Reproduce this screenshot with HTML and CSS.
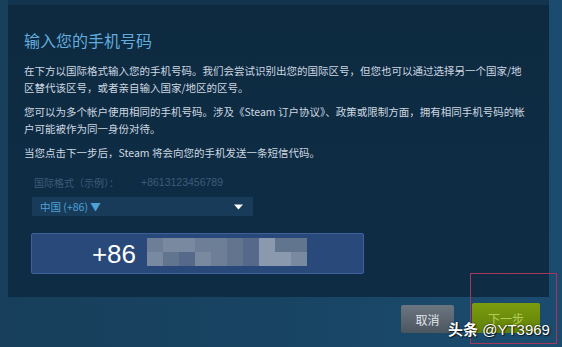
FILE: index.html
```html
<!DOCTYPE html>
<html lang="zh-CN">
<head>
<meta charset="utf-8">
<title>输入您的手机号码</title>
<link rel="stylesheet" href="styles.css">
</head>
<body>
<div class="page">
  <div class="panel">
    <h1 class="title">输入您的手机号码</h1>
    <p class="text">在下方以国际格式输入您的手机号码。我们会尝试识别出您的国际区号，但您也可以通过选择另一个国家/地<br>区替代该区号，或者亲自输入国家/地区的区号。</p>
    <p class="text">您可以为多个帐户使用相同的手机号码。涉及《Steam 订户协议》、政策或限制方面，拥有相同手机号码的帐<br>户可能被作为同一身份对待。</p>
    <p class="text">当您点击下一步后，Steam 将会向您的手机发送一条短信代码。</p>
    <div class="form">
      <div class="example">
        <span class="example-label">国际格式（示例）：</span>
        <span class="example-value">+8613123456789</span>
      </div>
      <div class="select">
        <span class="select-text">中国 (+86) ▼</span>
        <svg class="caret" width="9" height="6" viewBox="0 0 9 6"><path d="M0 0.5H9L4.5 5.5Z" fill="#ffffff"/></svg>
      </div>
      <div class="phone">
        <span class="cc">+86</span>
        <div class="mosaic">
          <i class="m2"></i><i class="m1"></i><i class="m1"></i><i class="m2"></i><i class="m2"></i><i class="m3"></i><i class="m4"></i><i class="m5"></i><i class="m3"></i><i class="m3"></i>
          <i class="m1"></i><i class="m3"></i><i class="m4"></i><i class="m1"></i><i class="m2"></i><i class="m3"></i><i class="m4"></i><i class="m5"></i><i class="m5"></i><i class="m1"></i>
        </div>
      </div>
    </div>
  </div>
  <div class="footer">
    <button class="btn btn-cancel">取消</button>
    <button class="btn btn-next">下一步</button>
  </div>
  <div class="highlight"></div>
  <div class="watermark"><b>头条</b> @YT3969</div>
</div>
</body>
</html>
```

FILE: styles.css
```css
* { box-sizing: border-box; }
html, body { margin: 0; padding: 0; }
body {
  width: 562px;
  height: 347px;
  overflow: hidden;
  font-family: "Noto Sans CJK SC", "Noto Sans", "Liberation Sans", sans-serif;
  background: linear-gradient(90deg, #173f5b 0%, #184463 50%, #1b4c6f 100%);
}
.page {
  position: relative;
  height: 347px;
  padding: 5px 13px 0 8px;
}
.panel {
  height: 292px;
  padding: 25px 16px 0 16px;
  background: linear-gradient(180deg, #0d2a40 0%, #0e2d45 100%);
  box-shadow: 0 -5px 0 #12344f;
}
.title {
  margin: 0 0 12px 0;
  font-size: 16px;
  line-height: 20px;
  font-weight: 400;
  color: #62acdd;
}
.text {
  margin: 0 0 7px 0;
  font-size: 10.5px;
  line-height: 17px;
  color: #cdd8e1;
  white-space: nowrap;
}
.form {
  margin: 13px 0 0 8px;
}
.example {
  display: flex;
  padding-left: 2px;
  font-size: 10px;
  line-height: 17px;
  color: #3c5d7a;
  white-space: nowrap;
}
.example-label { flex: none; width: 107px; }
.example-value {
  font-family: "Liberation Sans", "Noto Sans", sans-serif;
  font-size: 10.5px;
}
.select {
  margin-top: 6px;
  width: 221px;
  height: 19px;
  padding: 0 10px 0 8px;
  display: flex;
  align-items: center;
  justify-content: space-between;
  background: #173b58;
  font-size: 10.5px;
  color: #4ea2d8;
}
.phone {
  margin: 17px 0 0 -1px;
  width: 333px;
  height: 41px;
  display: flex;
  align-items: center;
  gap: 11px;
  background: #29497a;
  border: 1px solid #3e619b;
  border-radius: 2px;
}
.cc {
  width: 104px;
  text-align: right;
  font-family: "Liberation Sans", "Noto Sans", sans-serif;
  font-size: 26px;
  color: #ffffff;
  line-height: 30px;
}
.mosaic {
  display: grid;
  grid-template-columns: repeat(10, 16px);
  grid-template-rows: 14px 14px;
  width: 159px;
  margin-top: -4px;
}
.mosaic i { display: block; }
.m1 { background: #7889a0; }
.m2 { background: #6d7f97; }
.m3 { background: #62758e; }
.m4 { background: #56698a; }
.m5 { background: #8a99ad; }
.footer {
  display: flex;
  justify-content: flex-end;
  align-items: center;
  gap: 18px;
  padding: 6px 9px 0 0;
}
.btn {
  border: 0;
  border-radius: 2px;
  font-family: "Noto Sans CJK SC", sans-serif;
  font-size: 12px;
  padding: 0;
}
.btn-cancel {
  width: 53px;
  height: 28px;
  margin-top: 2px;
  color: #e2e6ea;
  background: linear-gradient(180deg, #6b7681 0%, #4b5660 100%);
}
.btn-next {
  width: 68px;
  height: 30px;
  color: #b4cc5e;
  background: linear-gradient(180deg, #7a9c0e 0%, #617f07 100%);
}
.highlight {
  position: absolute;
  left: 470px;
  top: 273px;
  width: 87px;
  height: 71px;
  border: 1px solid #a83658;
}
.watermark {
  position: absolute;
  left: 448px;
  top: 319px;
  font-family: "Liberation Sans", "Noto Sans CJK SC", sans-serif;
  font-size: 15px;
  line-height: 20px;
  color: #ffffff;
  text-shadow: 0 0 2px rgba(0,0,0,0.7), 1px 1px 1px rgba(0,0,0,0.6);
  white-space: nowrap;
}
.watermark b { font-family: "Noto Sans CJK SC", sans-serif; font-weight: 700; }
```
